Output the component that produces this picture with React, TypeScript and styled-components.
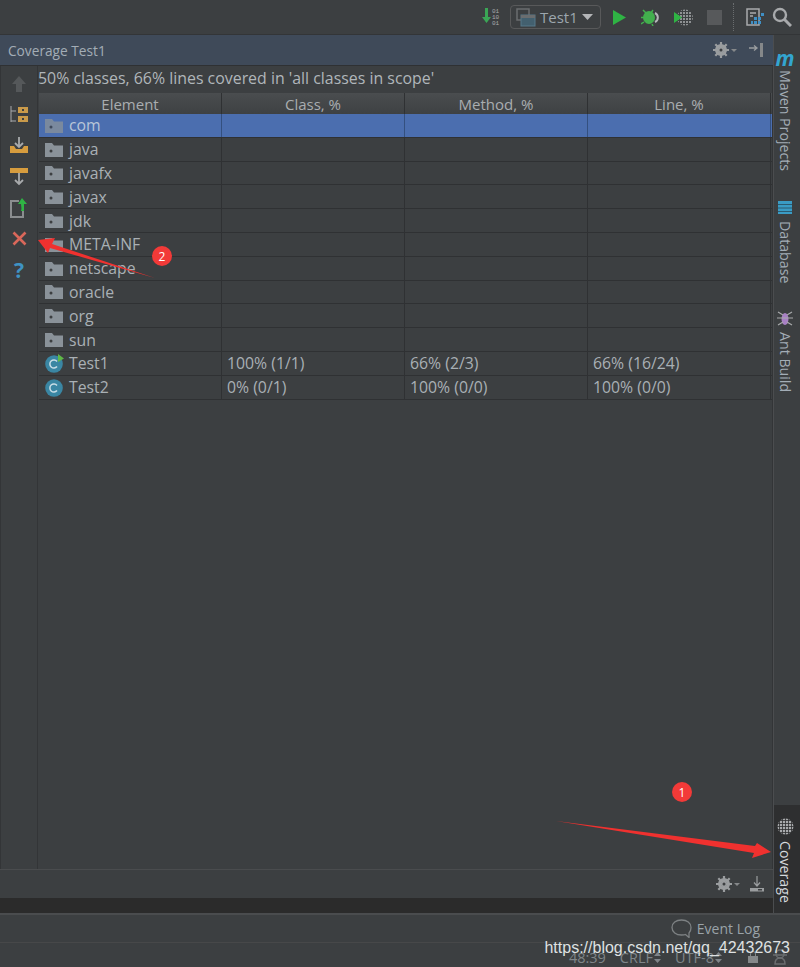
import styled, { createGlobalStyle } from "styled-components";

const GlobalStyle = createGlobalStyle`
  html, body {
    margin: 0;
    padding: 0;
    background: #3c3f41;
  }
  * {
    box-sizing: border-box;
  }
`;

const folders = ["com", "java", "javafx", "javax", "jdk", "META-INF", "netscape", "oracle", "org", "sun"];

const classes = [
  { name: "Test1", cls: "100% (1/1)", method: "66% (2/3)", line: "66% (16/24)", running: true },
  { name: "Test2", cls: "0% (0/1)", method: "100% (0/0)", line: "100% (0/0)", running: false },
];

const FolderIcon = () => (
  <svg width="18" height="15" viewBox="0 0 18 15">
    <path d="M0 1h7l2 2.5h9V15H0z" fill="#8a9299" />
    <circle cx="6" cy="9" r="1.5" fill="#3c3f41" />
  </svg>
);

const ClassIcon = ({ running }: { running: boolean }) => (
  <svg width="18" height="20" viewBox="0 0 18 20" overflow="visible">
    <circle cx="9" cy="11" r="8.8" fill="#3a86a3" />
    <path d="M12 8.5a4 4 0 1 0 0 5" fill="none" stroke="#c8dde6" strokeWidth="1.5" />
    {running && <path d="M13 1l6 4.5-6 3.5z" fill="#5fb848" />}
  </svg>
);

const Gear = () => (
  <svg width="24" height="16" viewBox="0 0 24 16">
    <circle cx="8" cy="8" r="4.5" fill="none" stroke="#9a9d9f" strokeWidth="3" />
    <path d="M8 0v16M0 8h16M2.3 2.3l11.4 11.4M13.7 2.3L2.3 13.7" stroke="#9a9d9f" strokeWidth="2.2" />
    <circle cx="8" cy="8" r="1.5" fill="#3c3f41" />
    <path d="M18 7h6l-3 3z" fill="#85888a" />
  </svg>
);

const Stepper = () => (
  <svg width="7" height="11" viewBox="0 0 7 11">
    <path d="M3.5 0L7 4H0zM0 7h7l-3.5 4z" fill="#7f8589" />
  </svg>
);

const App = () => {
  return (
    <Page>
      <GlobalStyle />
      <TopBar>
        <svg width="20" height="20" viewBox="0 0 20 20">
          <path d="M3 1h3v9h3l-4.5 6L0 10h3z" fill="#3aa655" />
          <text x="10" y="6" fontSize="6" fontFamily="Liberation Mono" fill="#a9abad">01</text>
          <text x="10" y="12" fontSize="6" fontFamily="Liberation Mono" fill="#a9abad">10</text>
          <text x="10" y="18" fontSize="6" fontFamily="Liberation Mono" fill="#a9abad">01</text>
        </svg>
        <RunConfig>
          <svg width="20" height="19" viewBox="0 0 20 19">
            <rect x="1" y="1" width="12" height="11" fill="none" stroke="#6a6d6f" strokeWidth="1.5" />
            <rect x="5" y="7" width="14" height="11" fill="#43606f" stroke="#56798a" />
            <rect x="5" y="7" width="14" height="3" fill="#6a6d6f" />
          </svg>
          <RunName>Test1</RunName>
          <svg width="11" height="6" viewBox="0 0 11 6">
            <path d="M0 0h11L5.5 6z" fill="#b4b6b8" />
          </svg>
        </RunConfig>
        <RunIcons>
          <svg width="15" height="17" viewBox="0 0 15 17">
            <path d="M1 1l13 7.5L1 16z" fill="#2fb344" />
          </svg>
          <svg width="19" height="17" viewBox="0 0 19 17">
            <ellipse cx="8" cy="8.5" rx="6" ry="6.5" fill="#42b04d" />
            <path d="M2 1l3 3M12 1l-2 3M0 8.5h3M0 15l3-2M11 15l1 2" stroke="#42b04d" strokeWidth="1.5" />
            <path d="M14 4a5 5 0 0 1 0 9" fill="none" stroke="#b5b7b9" strokeWidth="2" />
          </svg>
          <svg width="19" height="17" viewBox="0 0 19 17">
            <defs>
              <pattern id="dots" width="3" height="3" patternUnits="userSpaceOnUse">
                <rect width="2" height="2" fill="#8e9193" />
              </pattern>
            </defs>
            <circle cx="11" cy="8.5" r="8" fill="url(#dots)" />
            <path d="M0 3l8 5.5L0 14z" fill="#2fb344" />
          </svg>
          <StopSquare />
        </RunIcons>
        <DottedSeparator />
        <svg width="18" height="19" viewBox="0 0 18 19">
          <rect x="1" y="1" width="12" height="16" fill="none" stroke="#a8aaac" strokeWidth="1.5" />
          <path d="M4 5h6M4 8h3" stroke="#a8aaac" strokeWidth="1.5" />
          <path d="M8 9h3v3H8zM12 9h3v3h-3zM12 13h3v3h-3zM8 13h3v3H8zM5 13h2v3H5zM15 5h3v3h-3z" fill="#3f8fc4" />
        </svg>
        <svg width="20" height="20" viewBox="0 0 20 20">
          <circle cx="8" cy="8" r="6" fill="none" stroke="#a8aaac" strokeWidth="2.4" />
          <path d="M12.5 12.5L19 19" stroke="#a8aaac" strokeWidth="3" />
        </svg>
      </TopBar>

      <Workspace>
        <Main>
          <PanelHeader>
            <PanelTitle>Coverage Test1</PanelTitle>
            <HeaderTools>
              <Gear />
              <svg width="16" height="16" viewBox="0 0 16 16">
                <path d="M0 6h7M5 3.5L8 6 5 8.5" fill="none" stroke="#9a9d9f" strokeWidth="1.3" />
                <rect x="11" y="1" width="3" height="14" fill="#85888a" />
              </svg>
            </HeaderTools>
          </PanelHeader>
          <PanelBody>
            <SideTools>
              <svg width="16" height="18" viewBox="0 0 16 18">
                <path d="M8 1l7 8h-4v8H5V9H1z" fill="#55585a" />
              </svg>
              <svg width="19" height="19" viewBox="0 0 19 19">
                <path d="M1 1v16M1 6h5M1 16h5" stroke="#a8aaac" fill="none" />
                <rect x="8" y="2" width="10" height="6" fill="#c99a4a" />
                <rect x="8" y="11" width="10" height="6" fill="#c99a4a" />
                <rect x="12" y="4" width="2" height="2" fill="#3c3f41" />
                <rect x="12" y="13" width="2" height="2" fill="#3c3f41" />
              </svg>
              <svg width="18" height="17" viewBox="0 0 18 17">
                <path d="M9 0v9M5 6l4 4 4-4" fill="none" stroke="#a8aaac" strokeWidth="1.8" />
                <path d="M0 9h4l2 3h6l2-3h4v7H0z" fill="#d69c3e" />
              </svg>
              <svg width="18" height="18" viewBox="0 0 18 18">
                <rect y="0" width="18" height="5" fill="#d69c3e" />
                <path d="M9 5v11M5 12l4 4 4-4" fill="none" stroke="#a8aaac" strokeWidth="1.8" />
              </svg>
              <svg width="18" height="20" viewBox="0 0 18 20">
                <path d="M9 3H1v16h12v-8" fill="none" stroke="#8a8d8f" strokeWidth="2" />
                <path d="M12 0l5 6h-3v7h-3c1-3 0-5 0-7H8z" fill="#2fb344" />
              </svg>
              <svg width="15" height="15" viewBox="0 0 15 15">
                <path d="M1.5 1.5l12 12M13.5 1.5l-12 12" stroke="#d9675a" strokeWidth="2.6" />
              </svg>
              <HelpMark>?</HelpMark>
            </SideTools>
            <Content>
              <Summary>50% classes, 66% lines covered in 'all classes in scope'</Summary>
              <Table>
                <HeaderRow>
                  <HeaderCell>Element</HeaderCell>
                  <HeaderCell>Class, %</HeaderCell>
                  <HeaderCell>Method, %</HeaderCell>
                  <HeaderCell>Line, %</HeaderCell>
                </HeaderRow>
                {folders.map((name, i) => (
                  <Row key={name} $selected={i === 0}>
                    <NameCell $selected={i === 0}>
                      <FolderIcon />
                      {name}
                    </NameCell>
                    <Cell $selected={i === 0} />
                    <Cell $selected={i === 0} />
                    <Cell $selected={i === 0} />
                  </Row>
                ))}
                {classes.map((c) => (
                  <Row key={c.name}>
                    <NameCell>
                      <ClassIcon running={c.running} />
                      {c.name}
                    </NameCell>
                    <Cell>{c.cls}</Cell>
                    <Cell>{c.method}</Cell>
                    <Cell>{c.line}</Cell>
                  </Row>
                ))}
              </Table>
            </Content>
          </PanelBody>
          <BottomTools>
            <Gear />
            <svg width="14" height="16" viewBox="0 0 14 16">
              <path d="M7 0v9M4 6.5L7 10l3-3.5" fill="none" stroke="#9a9d9f" strokeWidth="1.2" />
              <rect x="0" y="12" width="14" height="3.5" fill="#9a9d9f" />
              <rect x="8" y="13" width="4" height="1.5" fill="#3c3f41" />
            </svg>
          </BottomTools>
          <DarkStrip />
        </Main>

        <RightStrip>
          <StripTop>
            <MavenMark>m</MavenMark>
            <StripLabel $gap={28}>Maven Projects</StripLabel>
            <svg width="16" height="17" viewBox="0 0 16 17">
              <path d="M1 2h14v13H1z" fill="#3a9bc4" />
              <path d="M1 5.5h14M1 9h14M1 12.5h14" stroke="#2b5a70" strokeWidth="1" />
            </svg>
            <StripLabel $gap={25}>Database</StripLabel>
            <svg width="16" height="18" viewBox="0 0 16 18">
              <ellipse cx="8" cy="10" rx="3.5" ry="6" fill="#a880c4" />
              <path d="M1 3l5 3M15 3l-5 3M0 9h16M1 16l5-3M15 16l-5-3" stroke="#a8aaac" strokeWidth="1.2" />
            </svg>
            <StripLabel $gap={0}>Ant Build</StripLabel>
          </StripTop>
          <CoverageTab>
            <svg width="17" height="17" viewBox="0 0 17 17">
              <defs>
                <pattern id="grid" width="3" height="3" patternUnits="userSpaceOnUse">
                  <rect width="2.2" height="2.2" fill="#a8aaac" />
                </pattern>
              </defs>
              <circle cx="8.5" cy="8.5" r="8" fill="url(#grid)" />
            </svg>
            <CoverageLabel>Coverage</CoverageLabel>
          </CoverageTab>
        </RightStrip>
      </Workspace>

      <StatusArea>
        <EventRow>
          <svg width="21" height="19" viewBox="0 0 21 19">
            <path d="M10.5 1C5 1 1 4 1 8.5S5 16 10.5 16c1.500 0 3 0 4-.5l3.500 3v-4.500c1.500-1.500 2-3 2-5.500C20 4 16 1 10.500 1z" fill="none" stroke="#7d8183" strokeWidth="1.3" />
          </svg>
          <EventText>Event Log</EventText>
        </EventRow>
        <StatusRow>
          <span>48:39</span>
          <StatusItem>CRLF<Stepper /></StatusItem>
          <StatusItem>UTF-8<Stepper /></StatusItem>
          <LockGap>
            <svg width="10" height="12" viewBox="0 0 10 12">
              <path d="M2.5 5V3a2.5 2.5 0 0 1 5 0v2" fill="none" stroke="#85888a" />
              <rect y="5" width="10" height="7" fill="#85888a" />
            </svg>
          </LockGap>
          <svg width="16" height="16" viewBox="0 0 16 16">
            <circle cx="8" cy="5" r="4" fill="none" stroke="#6a6d6f" strokeWidth="1.5" />
            <path d="M1 6h14M3 15c0-4 2-6 5-6s5 2 5 6z" fill="none" stroke="#6a6d6f" strokeWidth="1.5" />
          </svg>
        </StatusRow>
      </StatusArea>

      <Annotations width="800" height="967" viewBox="0 0 800 967">
        <path d="M38 240L55 238 52 244 155 278 50 248 48 253z" fill="#f0312f" />
        <path d="M556 821L755 846 757 843 771 852 752 858 754 853z" fill="#f0312f" />
      </Annotations>
      <Badge $x={152} $y={246}>2</Badge>
      <Badge $x={672} $y={782}>1</Badge>
      <Watermark>https://blog.csdn.net/qq_42432673</Watermark>
    </Page>
  );
};

export default App;

const Page = styled.div`
  position: relative;
  width: 800px;
  height: 967px;
  display: flex;
  flex-direction: column;
  overflow: hidden;
  background: #3c3f41;
  font-family: "Open Sans", "Liberation Sans", Arial, sans-serif;
  font-size: 15px;
  color: #a9b4bc;
`;

const TopBar = styled.div`
  height: 35px;
  flex: none;
  display: flex;
  align-items: center;
  justify-content: flex-end;
  gap: 8px;
  padding-right: 8px;
  border-bottom: 1px solid #333537;
`;

const RunConfig = styled.div`
  width: 91px;
  height: 24px;
  display: flex;
  align-items: center;
  gap: 4px;
  padding: 0 5px;
  border: 1px solid #58595a;
  border-radius: 4px;
`;

const RunName = styled.span`
  font-size: 15px;
  color: #9da7ae;
`;

const RunIcons = styled.div`
  display: flex;
  align-items: center;
  gap: 14px;
  margin-left: 3px;
`;

const StopSquare = styled.div`
  width: 15px;
  height: 15px;
  background: #57595b;
`;

const DottedSeparator = styled.div`
  width: 1px;
  height: 28px;
  margin: 0 4px 0 3px;
  border-left: 1px dotted #6a6d6f;
`;

const Workspace = styled.div`
  height: 878px;
  flex: none;
  display: flex;
`;

const Main = styled.div`
  width: 773px;
  display: flex;
  flex-direction: column;
`;

const PanelHeader = styled.div`
  height: 31px;
  flex: none;
  display: flex;
  align-items: center;
  justify-content: space-between;
  padding: 0 8px;
  background: #3f4a59;
  border-bottom: 1px solid #2f3133;
`;

const PanelTitle = styled.span`
  font-size: 13.7px;
  color: #a3adb6;
`;

const HeaderTools = styled.div`
  display: flex;
  align-items: center;
  gap: 12px;
`;

const PanelBody = styled.div`
  height: 803px;
  flex: none;
  display: flex;
  border-left: 1px solid #333537;
  border-right: 1px solid #333537;
`;

const SideTools = styled.div`
  width: 37px;
  flex: none;
  display: grid;
  grid-auto-rows: 31px;
  justify-items: center;
  align-items: center;
  align-content: start;
  padding-top: 2px;
  border-right: 1px solid #333537;
`;

const HelpMark = styled.span`
  font-size: 21px;
  line-height: 22px;
  font-weight: bold;
  color: #3f93c4;
`;

const Content = styled.div`
  flex: 1;
  display: flex;
  flex-direction: column;
`;

const Summary = styled.div`
  height: 27px;
  padding-top: 3px;
  font-size: 15.9px;
  line-height: 19px;
  white-space: nowrap;
  color: #b0b6ba;
`;

const Table = styled.div`
  width: 733px;
  margin-left: 1px;
  display: flex;
  flex-direction: column;
`;

const columns = "183px 183px 183px 183px";

const HeaderRow = styled.div`
  height: 21px;
  display: grid;
  grid-template-columns: ${columns};
  background: linear-gradient(#4a4d4f, #3e4143);
`;

const HeaderCell = styled.div`
  display: flex;
  align-items: center;
  justify-content: center;
  font-size: 15px;
  color: #a9adb0;
  border-right: 1px solid #2f3133;
`;

const Row = styled.div<{ $selected?: boolean }>`
  height: 23.8px;
  display: grid;
  grid-template-columns: ${columns};
  background: ${(p) => (p.$selected ? "#4b6eaf" : "transparent")};
  border-bottom: 1px solid #2f3133;
`;

const Cell = styled.div<{ $selected?: boolean }>`
  display: flex;
  align-items: center;
  padding-left: 5px;
  font-size: 15.8px;
  color: #a9b0b5;
  border-right: 1px solid ${(p) => (p.$selected ? "#34507f" : "#2f3133")};
`;

const NameCell = styled(Cell)`
  gap: 6px;
  padding-left: 6px;
  color: ${(p) => (p.$selected ? "#b9c6d8" : "#a9b0b5")};

  svg {
    flex: none;
    opacity: ${(p) => (p.$selected ? 0.75 : 1)};
  }
`;

const BottomTools = styled.div`
  height: 29px;
  flex: none;
  display: flex;
  align-items: center;
  justify-content: flex-end;
  gap: 10px;
  padding-right: 9px;
  border-top: 1px solid #4a4c4e;
`;

const DarkStrip = styled.div`
  flex: 1;
  background: #2b2b2b;
`;

const RightStrip = styled.div`
  flex: 1;
  display: flex;
  flex-direction: column;
  padding-right: 4px;
  border-left: 1px solid #4b4d4f;
`;

const StripTop = styled.div`
  flex: 1;
  display: flex;
  flex-direction: column;
  align-items: center;
  padding-top: 16px;
`;

const MavenMark = styled.span`
  height: 14px;
  font-size: 21px;
  line-height: 14px;
  font-weight: bold;
  font-style: italic;
  color: #33a5d0;
`;

const StripLabel = styled.span<{ $gap: number }>`
  writing-mode: vertical-rl;
  margin: 5px 0 ${(p) => p.$gap}px;
  font-size: 14.2px;
  line-height: 16px;
  color: #a3adb6;
`;

const CoverageTab = styled.div`
  height: 108px;
  flex: none;
  margin-right: -4px;
  padding: 13px 4px 0 0;
  display: flex;
  flex-direction: column;
  align-items: center;
  gap: 6px;
  background: #2e2f30;
`;

const CoverageLabel = styled.span`
  writing-mode: vertical-rl;
  font-size: 14.2px;
  line-height: 16px;
  color: #d6dade;
`;

const StatusArea = styled.div`
  flex: 1;
  display: flex;
  flex-direction: column;
  border-top: 2px solid #4a4c4e;
`;

const EventRow = styled.div`
  height: 28px;
  display: flex;
  align-items: center;
  justify-content: flex-end;
  gap: 5px;
  padding-right: 40px;
  border-bottom: 1px solid #474849;
`;

const EventText = styled.span`
  font-size: 14px;
  color: #9aa3a9;
`;

const StatusRow = styled.div`
  flex: 1;
  display: flex;
  align-items: center;
  justify-content: flex-end;
  gap: 14px;
  padding: 4px 12px 0 0;
  font-size: 14.5px;
  color: #7f8589;
`;

const StatusItem = styled.span`
  display: flex;
  align-items: center;
  gap: 1px;
`;

const LockGap = styled.span`
  display: flex;
  margin-left: 12px;
`;

const Annotations = styled.svg`
  position: absolute;
  top: 0;
  left: 0;
  pointer-events: none;
`;

const Badge = styled.div<{ $x: number; $y: number }>`
  position: absolute;
  left: ${(p) => p.$x}px;
  top: ${(p) => p.$y}px;
  width: 20px;
  height: 20px;
  border-radius: 50%;
  display: flex;
  align-items: center;
  justify-content: center;
  background: #f23a38;
  color: #fff;
  font-size: 12px;
`;

const Watermark = styled.div`
  position: absolute;
  right: 10px;
  top: 939px;
  font-family: "Liberation Sans", Arial, sans-serif;
  font-size: 16px;
  line-height: 18px;
  color: #dfe1e2;
`;
